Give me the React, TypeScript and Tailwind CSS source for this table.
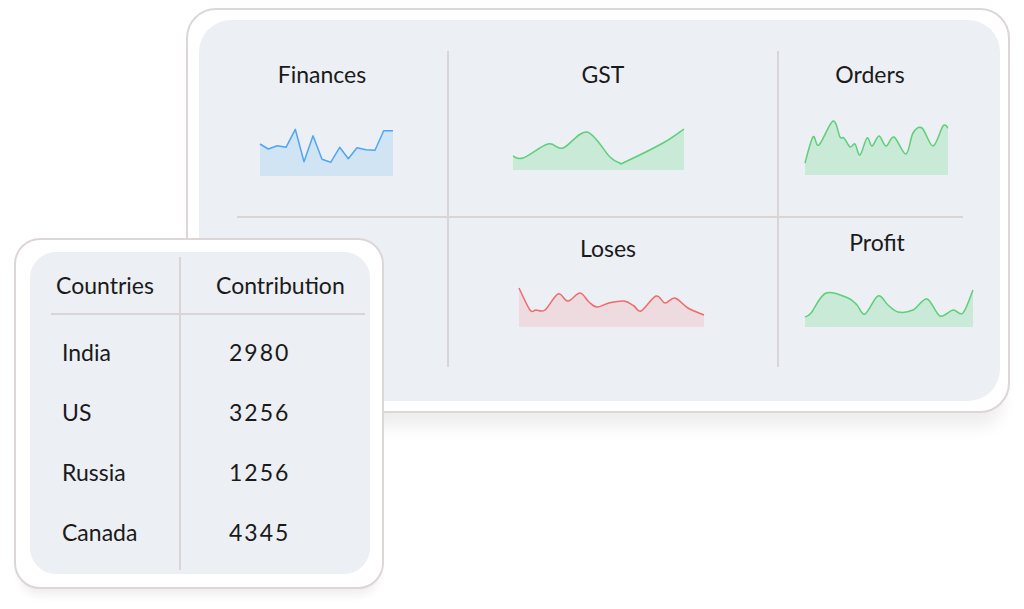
import React from "react";

type Pt = [number, number];

// catmull-rom -> cubic bezier, so the sparklines come out smooth
const smoothPath = (pts: Pt[]) => {
  let d = `M${pts[0][0]},${pts[0][1]}`;
  for (let i = 0; i < pts.length - 1; i++) {
    const p0 = pts[i - 1] ?? pts[i];
    const p1 = pts[i];
    const p2 = pts[i + 1];
    const p3 = pts[i + 2] ?? p2;
    const c1x = p1[0] + (p2[0] - p0[0]) / 6;
    const c1y = p1[1] + (p2[1] - p0[1]) / 6;
    const c2x = p2[0] - (p3[0] - p1[0]) / 6;
    const c2y = p2[1] - (p3[1] - p1[1]) / 6;
    d += ` C${c1x},${c1y} ${c2x},${c2y} ${p2[0]},${p2[1]}`;
  }
  return d;
};

const linePath = (pts: Pt[]) =>
  pts.map((p, i) => `${i === 0 ? "M" : "L"}${p[0]},${p[1]}`).join(" ");

interface SparkProps {
  w: number;
  h: number;
  pts: Pt[];
  stroke: string;
  fill: string;
  smooth?: boolean;
}

const Spark: React.FC<SparkProps> = ({ w, h, pts, stroke, fill, smooth = true }) => {
  const line = smooth ? smoothPath(pts) : linePath(pts);
  const last = pts[pts.length - 1];
  const area = `${line} L${last[0]},${h} L${pts[0][0]},${h} Z`;
  return (
    <svg width={w} height={h} viewBox={`0 0 ${w} ${h}`} className="block overflow-visible">
      <path d={area} fill={fill} />
      <path d={line} fill="none" stroke={stroke} strokeWidth={1.5} strokeLinejoin="round" />
    </svg>
  );
};

const finances: Pt[] = [
  [0, 16], [8.3, 21], [17.3, 17.7], [26, 19.3], [35.3, 1.3], [44, 33.7], [53, 7.7],
  [62, 31.3], [70.7, 34.3], [79.7, 19.3], [88.3, 30.7], [97, 19.7], [106, 21.7],
  [115, 22.3], [123.7, 2.7], [133, 2.7],
];
const gst: Pt[] = [
  [0, 28], [10, 30], [35, 16], [50, 20], [74, 4], [97, 29], [107, 35], [112, 34],
  [150, 15], [171, 1],
];
const orders: Pt[] = [
  [0, 43], [8, 17], [14, 25], [28, 1], [35, 17], [39, 18], [45, 27], [50, 24],
  [55, 35], [62, 18], [67, 26], [74, 16], [81, 26], [89, 17], [101, 34], [108, 13],
  [117, 8], [128, 26], [138, 6], [143, 8],
];
const loses: Pt[] = [
  [1, 1], [12, 23], [18, 23], [27, 23], [40, 7], [50, 14], [62, 6], [71, 15],
  [79, 20], [91, 16], [106, 14], [116, 19], [123, 24], [138, 9], [147, 16],
  [157, 11], [170, 21], [186, 28],
];
const profit: Pt[] = [
  [0, 28], [6, 24], [21, 4], [43, 9], [52, 16], [60, 25], [73, 7], [83, 16],
  [93, 23], [108, 21], [122, 10], [135, 27], [148, 21], [158, 24], [168, 1],
];

const rows = [
  { country: "India", value: "2980" },
  { country: "US", value: "3256" },
  { country: "Russia", value: "1256" },
  { country: "Canada", value: "4345" },
];

const GREEN = { stroke: "#5ccf78", fill: "#c9ead6" };

export default function App() {
  return (
    <div className="relative w-[1024px] h-[609px] overflow-hidden bg-white font-[Lato,'Open_Sans',sans-serif] text-[23px] leading-[28px] text-[#1a1a1a]">
      {/* dashboard card */}
      <div className="ml-[186px] mt-[8px] w-[824px] h-[405px] rounded-[30px] border-2 border-[#ddd6d6] bg-white pl-[11px] pr-[8px] py-[10px] shadow-[0_22px_16px_-8px_rgba(0,0,0,0.07)]">
        <div className="h-full w-full rounded-[32px] bg-[#eceff4] pl-[38px] pt-[31px]">
          <div className="grid grid-cols-[212px_330px_184px] grid-rows-[167px_149px]">
            {/* Finances */}
            <div className="border-r-2 border-b-2 border-[#dad4d4]">
              <div className="mt-[9px] w-[170px] text-center">Finances</div>
              <div className="mt-[40px] ml-[23px]">
                <Spark w={133} h={48} pts={finances} stroke="#4ea6f7" fill="#d1e4f4" smooth={false} />
              </div>
            </div>
            {/* GST */}
            <div className="border-r-2 border-b-2 border-[#dad4d4]">
              <div className="mt-[9px] w-[308px] text-center">GST</div>
              <div className="mt-[40px] ml-[64px]">
                <Spark w={171} h={42} pts={gst} {...GREEN} />
              </div>
            </div>
            {/* Orders */}
            <div className="border-b-2 border-[#dad4d4]">
              <div className="mt-[9px] w-[182px] text-center">Orders</div>
              <div className="mt-[32px] ml-[26px]">
                <Spark w={143} h={55} pts={orders} {...GREEN} />
              </div>
            </div>
            <div className="border-r-2 border-[#dad4d4]" />
            {/* Loses */}
            <div className="border-r-2 border-[#dad4d4]">
              <div className="mt-[16px] w-[318px] text-center">Loses</div>
              <div className="mt-[25px] ml-[69px]">
                <Spark w={186} h={40} pts={loses} stroke="#ef6b6b" fill="#eddbdf" />
              </div>
            </div>
            {/* Profit */}
            <div>
              <div className="mt-[10px] w-[196px] text-center">Profit</div>
              <div className="mt-[33px] ml-[26px]">
                <Spark w={168} h={38} pts={profit} {...GREEN} />
              </div>
            </div>
          </div>
        </div>
      </div>

      {/* countries table card, lies over the dashboard */}
      <div className="absolute left-[14px] top-[238px] w-[370px] h-[351px] rounded-[26px] border-2 border-[#ddd6d6] bg-white pl-[14px] pr-[12px] pt-[12px] pb-[13px] shadow-[0_12px_10px_-6px_rgba(0,0,0,0.07)]">
        <div className="h-full w-full rounded-[26px] bg-[#eceff4] pl-[21px] pt-[5px]">
          <div className="flex">
            <div className="w-[130px] border-r-2 border-[#dad4d4] pb-[8px]">
              <div className="h-[58px] border-b-2 border-[#dad4d4] pl-[5px] pt-[14px]">Countries</div>
              <div className="pt-[7px]">
                {rows.map((r) => (
                  <div key={r.country} className="flex h-[60px] items-center pl-[11px]">
                    {r.country}
                  </div>
                ))}
              </div>
            </div>
            <div className="w-[184px]">
              <div className="h-[58px] border-b-2 border-[#dad4d4] pl-[35px] pt-[14px]">Contribution</div>
              <div className="pt-[7px]">
                {rows.map((r) => (
                  <div key={r.country} className="flex h-[60px] items-center pl-[48px] tracking-[2px]">
                    {r.value}
                  </div>
                ))}
              </div>
            </div>
          </div>
        </div>
      </div>
    </div>
  );
}
